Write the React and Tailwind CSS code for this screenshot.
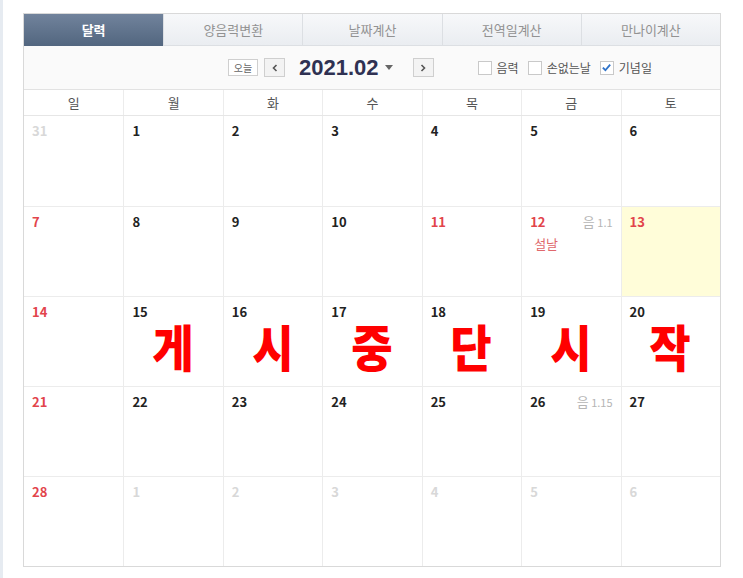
import React from 'react';

const FONT = { fontFamily: '"Noto Sans CJK KR", "Noto Sans", sans-serif' };

const tabs = ['달력', '양음력변환', '날짜계산', '전역일계산', '만나이계산'];
const weekdays = ['일', '월', '화', '수', '목', '금', '토'];

// [day, kind, lunarLabel, lunar, holiday, today] kind: n normal, r red, o other month
const weeks = [
  [[31, 'o'], [1, 'n'], [2, 'n'], [3, 'n'], [4, 'n'], [5, 'n'], [6, 'n']],
  [[7, 'r'], [8, 'n'], [9, 'n'], [10, 'n'], [11, 'r'], [12, 'r', '음', '1.1', '설날'], [13, 'r', null, null, null, true]],
  [[14, 'r'], [15, 'n'], [16, 'n'], [17, 'n'], [18, 'n'], [19, 'n'], [20, 'n']],
  [[21, 'r'], [22, 'n'], [23, 'n'], [24, 'n'], [25, 'n'], [26, 'n', '음', '1.15'], [27, 'n']],
  [[28, 'r'], [1, 'o'], [2, 'o'], [3, 'o'], [4, 'o'], [5, 'o'], [6, 'o']],
];

const dayColor = {
  n: 'text-[#222]',
  r: 'text-[#e2444b]',
  o: 'text-[#d8d8d8]',
};

const overlay = ['게', '시', '중', '단', '시', '작'];

function Checkbox({ checked, label }) {
  return (
    <label className="flex items-center gap-[5px] text-[12px] text-[#555]">
      <span className="flex h-[14px] w-[14px] items-center justify-center border border-[#c9c9c9] bg-white">
        {checked && (
          <svg viewBox="0 0 12 12" className="h-[11px] w-[11px]">
            <path d="M2 6.2 L4.8 9 L10 2.8" fill="none" stroke="#2f73c9" strokeWidth="2" />
          </svg>
        )}
      </span>
      {label}
    </label>
  );
}

export default function App() {
  return (
    <div className="min-h-[578px] bg-white border-l-[3px] border-[#e6ebf1] pt-[13px]" style={FONT}>
      <div className="ml-[20px] w-[698px] border border-[#d9d9d9]">
        {/* Tabs */}
        <div className="grid h-[32px] grid-cols-5">
          {tabs.map((t, i) => (
            <div
              key={t}
              className={
                i === 0
                  ? 'flex items-center justify-center bg-gradient-to-b from-[#71839c] to-[#52667f] text-[13px] font-bold text-white'
                  : 'flex items-center justify-center border-l border-b border-[#dcdfe3] bg-gradient-to-b from-[#f7f8fa] to-[#eaedf1] text-[13px] text-[#929292]'
              }
            >
              {t}
            </div>
          ))}
        </div>

        {/* Toolbar */}
        <div className="flex h-[44px] items-center border-b border-[#e2e2e2] bg-[#fafafa]">
          <div className="ml-[204px] flex items-center">
            <button className="flex h-[17px] w-[30px] items-center justify-center border border-[#cfcfcf] bg-white text-[10px] text-[#666]">
              오늘
            </button>
            <button className="ml-[6px] flex h-[19px] w-[21px] items-center justify-center border border-[#cfcfcf] bg-[#f3f3f3] text-[#555]">
              <svg viewBox="0 0 8 8" className="h-[8px] w-[8px]">
                <path d="M5.5 1 L2.5 4 L5.5 7" fill="none" stroke="#555" strokeWidth="1.6" />
              </svg>
            </button>
            <span
              className="ml-[14px] text-[22px] font-bold leading-none text-[#2f3152]"
              style={{ fontFamily: '"Liberation Sans", Arial, sans-serif' }}
            >
              2021.02
            </span>
            <svg viewBox="0 0 8 5" className="ml-[6px] h-[5px] w-[8px]">
              <path d="M0 0 L8 0 L4 5 Z" fill="#666" />
            </svg>
            <button className="ml-[20px] flex h-[19px] w-[21px] items-center justify-center border border-[#cfcfcf] bg-[#f3f3f3]">
              <svg viewBox="0 0 8 8" className="h-[8px] w-[8px]">
                <path d="M2.5 1 L5.5 4 L2.5 7" fill="none" stroke="#555" strokeWidth="1.6" />
              </svg>
            </button>
          </div>
          <div className="ml-[44px] flex items-center gap-[9px]">
            <Checkbox label="음력" />
            <Checkbox label="손없는날" />
            <Checkbox label="기념일" checked />
          </div>
        </div>

        {/* Weekday header */}
        <div className="grid h-[26px] grid-cols-7 border-b border-[#e6e6e6]">
          {weekdays.map((w, i) => (
            <div
              key={w}
              className={`flex items-center justify-center text-[13px] text-[#555] ${i > 0 ? 'border-l border-[#ececec]' : ''}`}
            >
              {w}
            </div>
          ))}
        </div>

        {/* Weeks */}
        {weeks.map((week, wi) => (
          <div key={wi} className={`relative grid h-[90px] grid-cols-7 ${wi > 0 ? 'border-t border-[#ececec]' : ''}`}>
            {week.map(([d, kind, lunarLabel, lunar, holiday, today], di) => (
              <div
                key={di}
                className={`px-[8px] pt-[6px] ${di > 0 ? 'border-l border-[#ececec]' : ''} ${today ? 'bg-[#fffdd9]' : ''}`}
              >
                <div className="flex items-start justify-between">
                  <span className={`text-[13px] font-bold leading-[18px] ${dayColor[kind]}`}>{d}</span>
                  {lunar && (
                    <span className="text-[11px] leading-[18px] text-[#b5b5b5]">
                      <span className="text-[13px]">{lunarLabel}</span> {lunar}
                    </span>
                  )}
                </div>
                {holiday && <div className="mt-[3px] pl-[4px] text-[13px] text-[#e0686c]">{holiday}</div>}
              </div>
            ))}
            {wi === 2 && (
              <div className="pointer-events-none absolute inset-0 grid grid-cols-7 items-center">
                <div />
                {overlay.map((c, i) => (
                  <div key={i} className="pt-[6px] text-center text-[50px] font-black leading-none text-[#ff0000]">
                    <span className="inline-block scale-x-90">{c}</span>
                  </div>
                ))}
              </div>
            )}
          </div>
        ))}
      </div>
    </div>
  );
}
